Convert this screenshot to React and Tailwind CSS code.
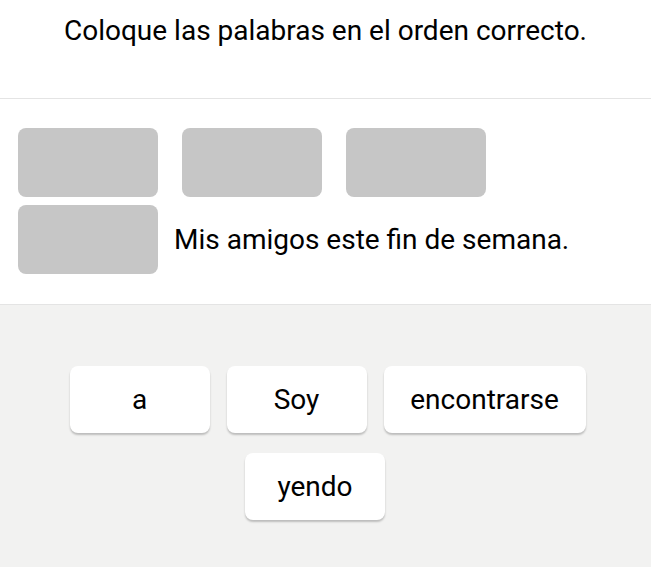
import React from "react";

const words = ["a", "Soy", "encontrarse"];

function Slot() {
  return <div className="h-[69px] w-[140px] shrink-0 rounded-lg bg-[#c6c6c6]" />;
}

function Word({ text, wide, className = "" }) {
  return (
    <button
      className={`flex h-[67px] items-center justify-center rounded-lg bg-white text-[28px] text-black shadow-[0_2px_2px_rgba(0,0,0,0.22)] ${
        wide ? "w-[202px]" : "w-[140px]"
      } ${className}`}
    >
      {text}
    </button>
  );
}

export default function App() {
  return (
    <div
      className="flex h-[567px] w-full flex-col bg-white text-black"
      style={{ fontFamily: "Roboto, 'Noto Sans', sans-serif" }}
    >
      {/* header */}
      <div className="h-[99px] border-b border-[#e4e4e4] pt-[14px] text-center">
        <h1 className="text-[28px] leading-[34px]">Coloque las palabras en el orden correcto.</h1>
      </div>

      {/* answer slots */}
      <div className="flex h-[206px] flex-col gap-2 border-b border-[#e4e4e4] px-[18px] pt-[29px]">
        <div className="flex gap-6">
          <Slot />
          <Slot />
          <Slot />
        </div>
        <div className="flex items-center gap-4">
          <Slot />
          <span className="text-[28px]">Mis amigos este fin de semana.</span>
        </div>
      </div>

      {/* word bank */}
      <div className="flex flex-1 flex-col items-center gap-5 bg-[#f2f2f1] pt-[61px]">
        <div className="flex gap-[17px] pl-1">
          {words.map((w) => (
            <Word key={w} text={w} wide={w === "encontrarse"} />
          ))}
        </div>
        <div className="flex pr-[21px]">
          <Word text="yendo" />
        </div>
      </div>
    </div>
  );
}
